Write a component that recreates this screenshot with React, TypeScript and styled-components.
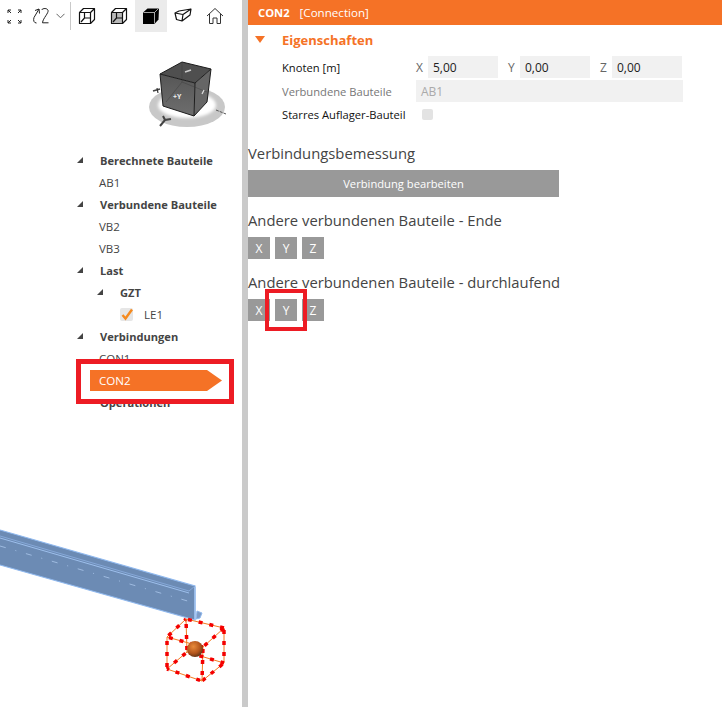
import React from 'react';
import styled, { createGlobalStyle } from 'styled-components';

const Global = createGlobalStyle`
  html, body { margin: 0; padding: 0; background: #fff; }
  body { font-family: "Open Sans", "Noto Sans", sans-serif; width: 722px; height: 707px; overflow: hidden; }
`;
const Page = styled.div`display: flex; width: 722px; height: 707px; overflow: hidden; position: relative;`;
const LeftPane = styled.div`position: relative; width: 242px; height: 707px; flex: none; overflow: hidden;`;
const Splitter = styled.div`width: 6px; flex: none; background: #cacaca;`;
const RightPane = styled.div`flex: 1; min-width: 0; display: flex; flex-direction: column;`;

const Toolbar = styled.div`display: flex; align-items: flex-start; height: 32px;`;
const ToolButton = styled.div<{ $active?: boolean; $w?: number }>`
  width: ${p => p.$w ?? 32}px; height: 32px; flex: none; display: flex; align-items: center; justify-content: center;
  background: ${p => (p.$active ? '#ebebeb' : 'transparent')};
`;
const ToolSep = styled.div`width: 1px; height: 28px; margin: 2px 0 0 4px; background: #c9c9c9; flex: none;`;

const Tree = styled.div`position: relative; margin-top: 117px; display: flex; flex-direction: column;`;
const Row = styled.div<{ $x: number; $bold?: boolean }>`
  position: relative; height: 22px; display: flex; align-items: center; padding-left: ${p => p.$x}px;
  font-size: ${p => (p.$bold ? 11.1 : 11.5)}px; color: #444; font-weight: ${p => (p.$bold ? 700 : 400)}; white-space: nowrap;
`;
const Expander = styled.span<{ $x: number }>`
  position: absolute; left: ${p => p.$x}px; top: 8px; width: 0; height: 0;
  border-left: 6px solid transparent; border-bottom: 6px solid #444;
`;
const Check = styled.span`
  width: 13px; height: 13px; border-radius: 2px; background: #e6e6e6; margin-right: 11px; display: flex;
`;
const Flag = styled.div`
  position: absolute; left: 90px; top: 370px; width: 132px; height: 21px; box-sizing: border-box; padding-left: 9px;
  display: flex; align-items: center; color: #fff; font-size: 11.6px; background: #f57226;
  clip-path: polygon(0 0, 117px 0, 100% 50%, 117px 100%, 0 100%);
`;
const RedBoxTree = styled.div`position: absolute; left: 76px; top: 359px; width: 158px; height: 45px; box-sizing: border-box; border: 5px solid #ed1c24;`;
const RedBoxButton = styled.div`position: absolute; left: 265px; top: 289px; width: 42px; height: 42px; box-sizing: border-box; border: 4px solid #ed1c24;`;

const Drawing = styled.svg`position: absolute; display: block;`;

const Header = styled.div`
  height: 25px; background: #f57226; color: #fff; display: flex; align-items: center; padding-left: 10px; gap: 10px; font-size: 11.6px;
  b { font-weight: 700; font-size: 11.2px; }
`;
const SectionHead = styled.div`
  height: 30px; display: flex; align-items: center; padding-left: 34px; position: relative;
  font-size: 13px; font-weight: 700; color: #f57226;
`;
const SectionArrow = styled.span`
  position: absolute; left: 7px; top: 11px; width: 0; height: 0;
  border-left: 5px solid transparent; border-right: 5px solid transparent; border-top: 7px solid #f57226;
`;
const PropRow = styled.div<{ $h?: number }>`display: flex; align-items: center; height: ${p => p.$h ?? 24}px; padding-left: 34px; font-size: 11.2px; color: #111;`;
const PropLabel = styled.div<{ $muted?: boolean }>`width: 134px; flex: none; white-space: nowrap; color: ${p => (p.$muted ? '#777' : '#111')};`;
const Axis = styled.span`width: 12px; flex: none; color: #666; font-size: 12px;`;
const Field = styled.div<{ $w: number; $muted?: boolean; $gap?: number }>`
  width: ${p => p.$w}px; height: 22px; box-sizing: border-box; flex: none; background: #f1f1f1; display: flex; align-items: center;
  padding-left: 5px; margin-right: ${p => p.$gap ?? 0}px; font-size: 12px; color: ${p => (p.$muted ? '#aaa' : '#222')};
`;
const CheckBox = styled.span`width: 11px; height: 11px; margin-left: 6px; border-radius: 2px; background: #e3e3e3; flex: none;`;
const Heading = styled.div<{ $top: number }>`margin-top: ${p => p.$top}px; height: 20px; display: flex; align-items: center; font-size: 14.8px; color: #444; white-space: nowrap;`;
const WideButton = styled.div`
  width: 311px; height: 27px; margin-top: 7px; background: #999; color: #fff; display: flex; align-items: center; justify-content: center; font-size: 11.2px;
`;
const AxisRow = styled.div`display: flex; gap: 5px; margin-top: 7px;`;
const AxisButton = styled.div`width: 22px; height: 22px; background: #999; color: #fff; font-size: 12px; display: flex; align-items: center; justify-content: center;`;

const stroke = { fill: 'none', stroke: '#111', strokeWidth: 1.2, strokeLinejoin: 'round' as const };

const WireCube = ({ fill = 'none' }: { fill?: string }) => (
  <svg width="18" height="18" viewBox="0 0 18 18">
    <path d="M1.5 5.5H12.5V16.5H1.5Z" {...stroke} fill={fill} />
    <path d="M1.5 5.5L5.5 1.5H16.5V12.5L12.5 16.5M12.5 5.5L16.5 1.5" {...stroke} />
    <path d="M6.5 6V11H12M6.5 11L3 15" {...stroke} />
  </svg>
);

const Tools = () => (
  <Toolbar>
    <ToolButton $w={28}>
      <svg width="15" height="15" viewBox="0 0 15 15" fill="none" stroke="#222" strokeWidth="1">
        <path d="M1 4V1H4M1 1L4 4M14 4V1H11M14 1L11 4M1 11V14H4M1 14L4 11M14 11V14H11M14 14L11 11" />
      </svg>
    </ToolButton>
    <ToolButton $w={26}>
      <svg width="18" height="18" viewBox="0 0 18 18" fill="none" stroke="#222" strokeWidth="1">
        <path d="M7 2L2 10.5C1 13.5 2 16 4.5 16M7 2L7.5 6.5M7 2L3 3.5" />
        <path d="M9.5 3C11 1 15 1 16 3.2C17 6 11 11 10.5 15.8H16.5" />
      </svg>
    </ToolButton>
    <ToolButton $w={12}>
      <svg width="9" height="6" viewBox="0 0 9 6" fill="none" stroke="#666" strokeWidth="1"><path d="M.5 .8L4.5 4.8L8.5 .8" /></svg>
    </ToolButton>
    <ToolSep />
    <ToolButton><WireCube /></ToolButton>
    <ToolButton><WireCube fill="#b9b9b9" /></ToolButton>
    <ToolButton $active>
      <svg width="18" height="18" viewBox="0 0 18 18">
        <path d="M1 5.5L5.5 1.5H17L16.5 12.5L12.5 17H1Z" fill="#000" />
        <path d="M1.5 5.5H12.5L16.5 1.5M12.5 5.5V16.5" fill="none" stroke="#eee" strokeWidth=".7" />
      </svg>
    </ToolButton>
    <ToolButton>
      <svg width="18" height="18" viewBox="0 0 18 18" {...stroke}>
        <path d="M1 6L5 4L17 2L16 8L8 14L2.5 12.5Z M1 6L9 7.5L8 14M9 7.5L17 2" />
      </svg>
    </ToolButton>
    <ToolButton>
      <svg width="18" height="18" viewBox="0 0 18 18" fill="none" stroke="#333" strokeWidth="1">
        <path d="M1 9L9 1.5L17 9M3.5 7V16.5H7V11H11V16.5H14.5V7" />
      </svg>
    </ToolButton>
  </Toolbar>
);

const Gizmo = () => (
  <Drawing width="100" height="90" viewBox="140 50 100 90" style={{ left: 140, top: 50 }}>
    <defs>
      <linearGradient id="gzFace" x1="0" y1="0" x2="0" y2="1">
        <stop offset="0" stopColor="#565656" /><stop offset="1" stopColor="#6e6e6e" />
      </linearGradient>
      <filter id="gzBlur"><feGaussianBlur stdDeviation="1.5" /></filter>
    </defs>
    <ellipse cx="187" cy="107" rx="38" ry="20" fill="#c8c8c8" />
    <ellipse cx="187" cy="105" rx="29" ry="13" fill="#fff" filter="url(#gzBlur)" />
    <path d="M153 91L160 89" stroke="#444" strokeWidth="1.6" />
    <path d="M157 88L158 93" stroke="#333" strokeWidth="1.2" />
    <path d="M216 110L226 114" stroke="#555" strokeWidth="1" strokeDasharray="3 1" />
    <path d="M160 126L165 120L171 119M165 120L163 116" fill="none" stroke="#444" strokeWidth="2" />
    <path d="M182 62L211 69L195 83L160 74Z" fill="#4f4f4f" />
    <path d="M160 74L195 83L194 116L163 106Z" fill="url(#gzFace)" />
    <path d="M195 83L211 69L207 102L194 116Z" fill="#666" />
    <path d="M182 62L211 69L207 102L194 116L163 106L160 74ZM160 74L195 83L211 69M195 83L194 116" fill="none" stroke="#1c1c1c" strokeWidth="1" strokeLinejoin="round" />
    <path d="M166 102L182 82L207 92M182 82L182 62" fill="none" stroke="#333" strokeWidth=".5" opacity=".7" />
    <text x="173" y="99" fontSize="7" fill="#eee" fontFamily="Open Sans" fontWeight="700">+Y</text>
    <path d="M185 72L191 70" stroke="#ccc" strokeWidth="1.6" />
    <path d="M204 90L202 94" stroke="#ddd" strokeWidth="1.2" />
  </Drawing>
);

const edges: [number, number, number, number][] = [
  [186, 619, 224, 628], [224, 628, 224, 663], [224, 663, 202, 681], [202, 681, 167, 669], [167, 669, 167, 637], [167, 637, 186, 619],
  [167, 637, 203, 647], [203, 647, 224, 628], [203, 647, 202, 681], [187, 652, 186, 619], [187, 652, 167, 669], [187, 652, 224, 663],
];

const Beam = () => (
  <Drawing width="242" height="197" viewBox="0 510 242 197" style={{ left: 0, top: 510 }}>
    <defs>
      <radialGradient id="ball" cx=".4" cy=".35" r=".7">
        <stop offset="0" stopColor="#e98a3a" /><stop offset=".6" stopColor="#b4561c" /><stop offset="1" stopColor="#5a3014" />
      </radialGradient>
    </defs>
    <path d="M197 611L202 613L200 618L196 619Z" fill="#7e9cc6" stroke="#8fb8ee" strokeWidth="1" />
    <path d="M0 530L195 586V620L0 565Z" fill="#6c8bb4" />
    <path d="M0 530L195 586V620L0 565" fill="none" stroke="#8fb8ee" strokeWidth="1.2" />
    <path d="M0 536L189 591L195 586" fill="none" stroke="#86a8d8" strokeWidth="1" />
    <path d="M0 538L189 593" fill="none" stroke="#9dbfec" strokeWidth="1" />
    <path d="M0 546L191 602" fill="none" stroke="#b4d0f4" strokeWidth=".7" strokeDasharray="6 10 1 10" />
    <path d="M195 587V620" fill="none" stroke="#a0c2ee" strokeWidth="1.5" />
    {edges.map(([a, b, c, d], i) => (
      <g key={i}>
        <line x1={a} y1={b} x2={c} y2={d} stroke="#f47a20" strokeWidth="1" />
        <line x1={a} y1={b} x2={c} y2={d} stroke="#f40000" strokeWidth="3.5" strokeDasharray="4 7" strokeDashoffset="-2" />
      </g>
    ))}
    <circle cx="195" cy="649" r="8" fill="url(#ball)" />
  </Drawing>
);

const TickMark = () => (
  <svg width="13" height="13" viewBox="0 0 13 13" fill="none" stroke="#f58a1f" strokeWidth="2.4">
    <path d="M2.5 7L5.5 10.5L12 1.5" />
  </svg>
);

export default function App() {
  return (
    <Page>
      <Global />
      <LeftPane>
        <Gizmo />
        <Beam />
        <Tools />
        <Tree>
          <Row $x={100} $bold><Expander $x={77} />Berechnete Bauteile</Row>
          <Row $x={99}>AB1</Row>
          <Row $x={100} $bold><Expander $x={77} />Verbundene Bauteile</Row>
          <Row $x={99}>VB2</Row>
          <Row $x={99}>VB3</Row>
          <Row $x={100} $bold><Expander $x={77} />Last</Row>
          <Row $x={120} $bold><Expander $x={97} />GZT</Row>
          <Row $x={120}><Check><TickMark /></Check>LE1</Row>
          <Row $x={100} $bold><Expander $x={77} />Verbindungen</Row>
          <Row $x={99}>CON1</Row>
          <Row $x={99} />
          <Row $x={100} $bold>Operationen</Row>
        </Tree>
        <Flag>CON2</Flag>
        <RedBoxTree />
      </LeftPane>
      <Splitter />
      <RightPane>
        <Header><b>CON2</b><span>[Connection]</span></Header>
        <SectionHead><SectionArrow />Eigenschaften</SectionHead>
        <PropRow>
          <PropLabel>Knoten [m]</PropLabel>
          <Axis>X</Axis><Field $w={70} $gap={10}>5,00</Field>
          <Axis>Y</Axis><Field $w={70} $gap={10}>0,00</Field>
          <Axis>Z</Axis><Field $w={70}>0,00</Field>
        </PropRow>
        <PropRow>
          <PropLabel $muted>Verbundene Bauteile</PropLabel>
          <Field $w={267} $muted>AB1</Field>
        </PropRow>
        <PropRow $h={22}>
          <PropLabel>Starres Auflager-Bauteil</PropLabel>
          <CheckBox />
        </PropRow>
        <Heading $top={18}>Verbindungsbemessung</Heading>
        <WideButton>Verbindung bearbeiten</WideButton>
        <Heading $top={13}>Andere verbundenen Bauteile - Ende</Heading>
        <AxisRow><AxisButton>X</AxisButton><AxisButton>Y</AxisButton><AxisButton>Z</AxisButton></AxisRow>
        <Heading $top={13}>Andere verbundenen Bauteile - durchlaufend</Heading>
        <AxisRow><AxisButton>X</AxisButton><AxisButton>Y</AxisButton><AxisButton>Z</AxisButton></AxisRow>
      </RightPane>
      <RedBoxButton />
    </Page>
  );
}
